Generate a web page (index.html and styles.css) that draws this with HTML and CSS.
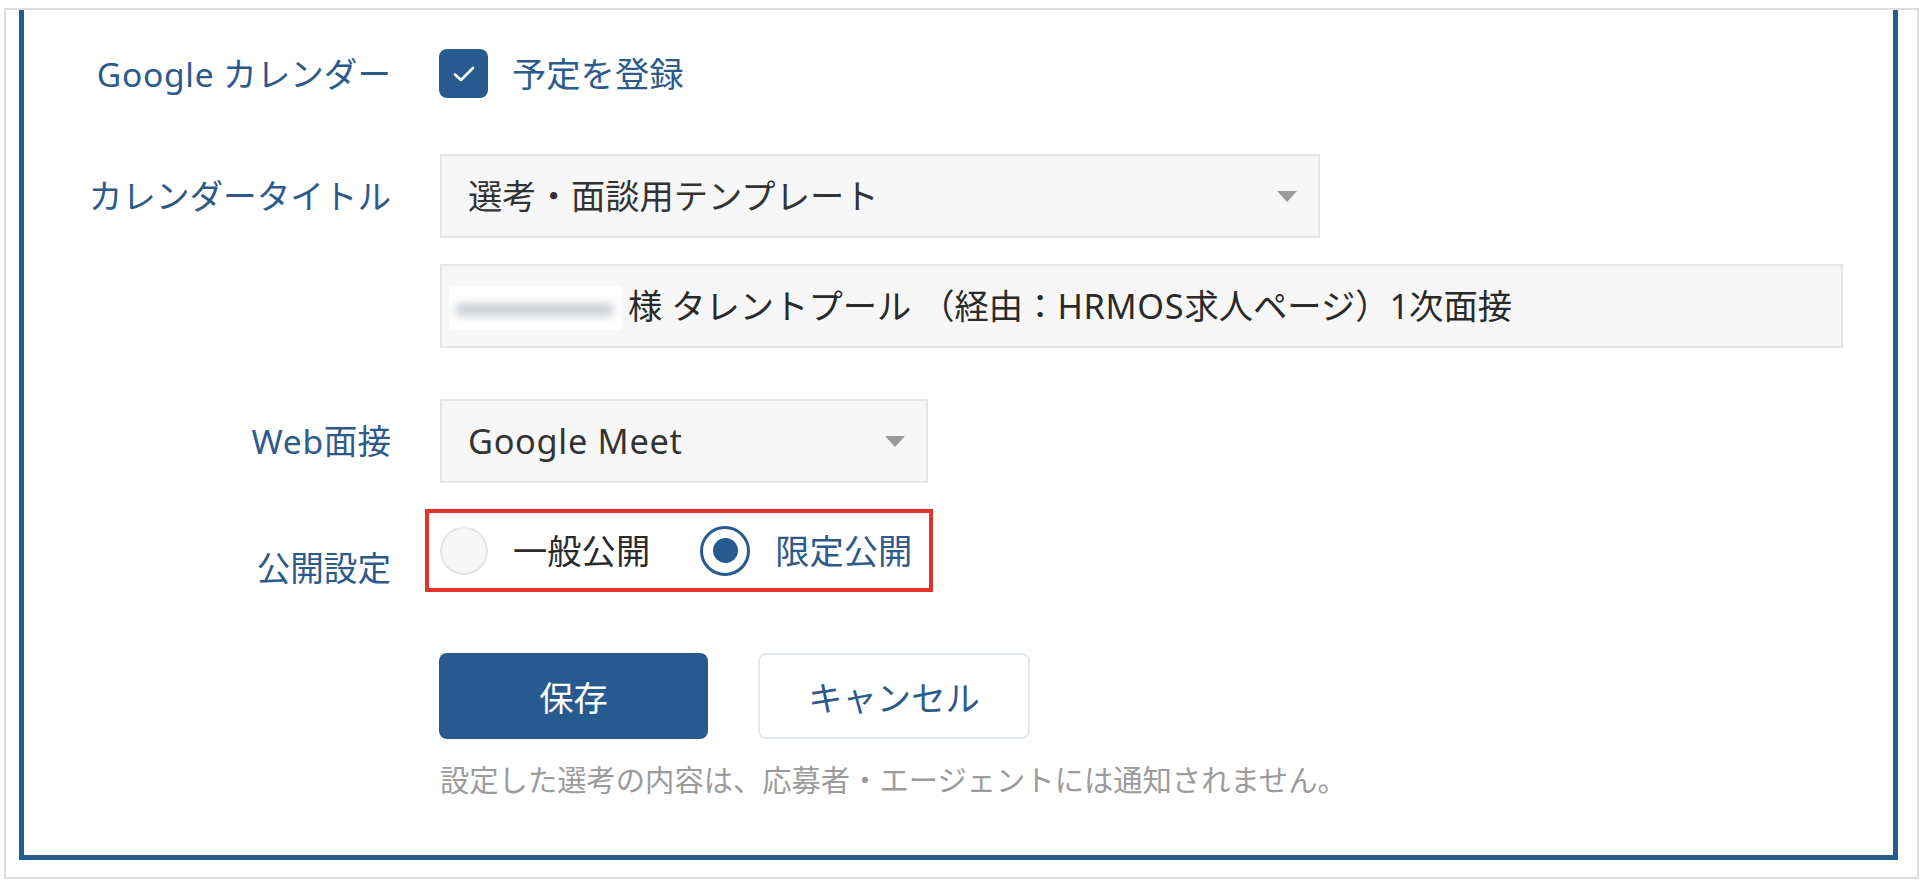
FILE: index.html
```html
<!DOCTYPE html>
<html lang="ja">
<head>
<meta charset="utf-8">
<title>Google カレンダー設定</title>
<link rel="stylesheet" href="styles.css">
</head>
<body>
<div class="frame">
  <div class="panel">
    <div class="row row-gcal">
      <div class="label"><span class="latin">Google</span> カレンダー</div>
      <div class="check">
        <span class="checkbox">
          <svg width="24" height="18" viewBox="0 0 24 18"><polyline points="3,9.5 9,15 21,3" fill="none" stroke="#fff" stroke-width="2.6" stroke-linecap="round" stroke-linejoin="round"/></svg>
        </span>
        <span class="check-text value">予定を登録</span>
      </div>
    </div>

    <div class="row row-title">
      <div class="label">カレンダータイトル</div>
      <div class="select select-wide">
        <span class="select-value value">選考・面談用テンプレート</span>
        <span class="caret"></span>
      </div>
    </div>

    <div class="row row-text">
      <div class="label"></div>
      <div class="textfield">
        <span class="blurred"><span class="blur-band"></span></span>
        <span class="field-text value">様 タレントプール （経由：<span class="latin">HRMOS</span>求人ページ）1次面接</span>
      </div>
    </div>

    <div class="row row-web">
      <div class="label"><span class="latin">Web</span>面接</div>
      <div class="select select-narrow">
        <span class="select-value value latin">Google Meet</span>
        <span class="caret"></span>
      </div>
    </div>

    <div class="row row-public">
      <div class="label label-low">公開設定</div>
      <div class="highlight">
        <div class="radio-item">
          <span class="radio"></span>
          <span class="radio-text value">一般公開</span>
        </div>
        <div class="radio-item selected">
          <span class="radio radio-on"><span class="radio-dot"></span></span>
          <span class="radio-text value">限定公開</span>
        </div>
      </div>
    </div>

    <div class="row row-buttons">
      <div class="label"></div>
      <div class="buttons">
        <button class="btn btn-primary">保存</button>
        <button class="btn btn-secondary">キャンセル</button>
      </div>
    </div>

    <div class="row row-note">
      <div class="label"></div>
      <p class="note">設定した選考の内容は、応募者・エージェントには通知されません。</p>
    </div>
  </div>
</div>
</body>
</html>
```

FILE: styles.css
```css
* { box-sizing: border-box; }

html, body {
  margin: 0;
  padding: 0;
  background: #ffffff;
}

body {
  font-family: "Noto Sans", "Noto Sans CJK JP", sans-serif;
  font-size: 33.6px;
  color: #333333;
}

.latin { letter-spacing: 0.7px; }

.value { font-size: 34.3px; }

.frame {
  margin: 8px 11px 0 4px;
  border: 2px solid #dedede;
  padding: 0 19px 17px 13px;
}

.panel {
  border: 5px solid #275a8f;
  border-top: none;
  padding: 39px 0 55px 0;
}

.row {
  display: flex;
  align-items: center;
}

.label {
  flex: none;
  width: 367px;
  margin-right: 49px;
  text-align: right;
  color: #2c5a8a;
  line-height: 48px;
  white-space: nowrap;
}

.row-title { margin-top: 56px; }
.row-text { margin-top: 26px; }
.row-web { margin-top: 51px; }
.row-public { margin-top: 26px; align-items: flex-start; }
.row-buttons { margin-top: 61px; }
.row-note { margin-top: 21px; }

.label-low { padding-top: 35px; }

/* checkbox */
.check {
  display: flex;
  align-items: center;
  margin-left: -1px;
}

.checkbox {
  width: 49px;
  height: 49px;
  border-radius: 8px;
  background: #275a8f;
  display: flex;
  align-items: center;
  justify-content: center;
}

.checkbox svg { display: block; }

.check-text {
  margin-left: 24px;
  color: #2c5a8a;
  line-height: 48px;
}

/* selects */
.select {
  height: 84px;
  background: #f7f7f7;
  border: 2px solid #e6e6e6;
  display: flex;
  align-items: center;
  justify-content: space-between;
  padding: 0 21px 0 26px;
}

.select-wide { width: 880px; }
.select-narrow { width: 488px; }

.select-value {
  color: #333333;
  line-height: 48px;
  white-space: nowrap;
}

.caret {
  width: 0;
  height: 0;
  border-left: 10.5px solid transparent;
  border-right: 10.5px solid transparent;
  border-top: 11px solid #9a9a9a;
}

/* text field */
.textfield {
  width: 1403px;
  height: 84px;
  background: #f7f7f7;
  border: 2px solid #e6e6e6;
  display: flex;
  align-items: center;
  padding: 0 20px 0 7px;
}

.blurred {
  flex: none;
  width: 173px;
  height: 44px;
  background: #ffffff;
  margin-top: 4px;
  margin-right: 6px;
  padding: 17px 8px 0 6px;
  overflow: hidden;
}

.blur-band {
  display: block;
  height: 14px;
  border-radius: 6px;
  background: #cdd1d7;
  filter: blur(4px);
}

.field-text {
  color: #2a2a2a;
  line-height: 48px;
  white-space: nowrap;
}

/* radios */
.highlight {
  width: 508px;
  height: 83px;
  margin-left: -15px;
  border: 4px solid #e3342a;
  display: flex;
  align-items: center;
  padding: 0 0 0 11px;
  gap: 50px;
}

.radio-item {
  display: flex;
  align-items: center;
}

.radio {
  flex: none;
  width: 48px;
  height: 48px;
  border-radius: 50%;
  border: 2px solid #e4e4e4;
  background: #f7f7f7;
}

.radio-on {
  width: 50px;
  height: 50px;
  border: 3px solid #275a8f;
  background: #ffffff;
  display: flex;
  align-items: center;
  justify-content: center;
}

.radio-dot {
  width: 25px;
  height: 25px;
  border-radius: 50%;
  background: #275a8f;
}

.radio-text {
  margin-left: 25px;
  line-height: 48px;
  color: #2a2a2a;
  white-space: nowrap;
}

.selected .radio-text { color: #2c5a8a; }

/* buttons */
.buttons {
  display: flex;
  gap: 50px;
  margin-left: -1px;
}

.btn {
  font-family: inherit;
  font-size: 34.3px;
  height: 86px;
  border-radius: 8px;
  cursor: pointer;
  display: flex;
  align-items: center;
  justify-content: center;
  padding: 0;
}

.btn-primary {
  width: 269px;
  background: #275a8f;
  border: none;
  color: #ffffff;
}

.btn-secondary {
  width: 272px;
  background: #ffffff;
  border: 2px solid #e1e8ef;
  color: #2c5a8a;
}

/* note */
.note {
  margin: 0;
  font-size: 29.3px;
  line-height: 40px;
  color: #9b9b9b;
  white-space: nowrap;
}
```
